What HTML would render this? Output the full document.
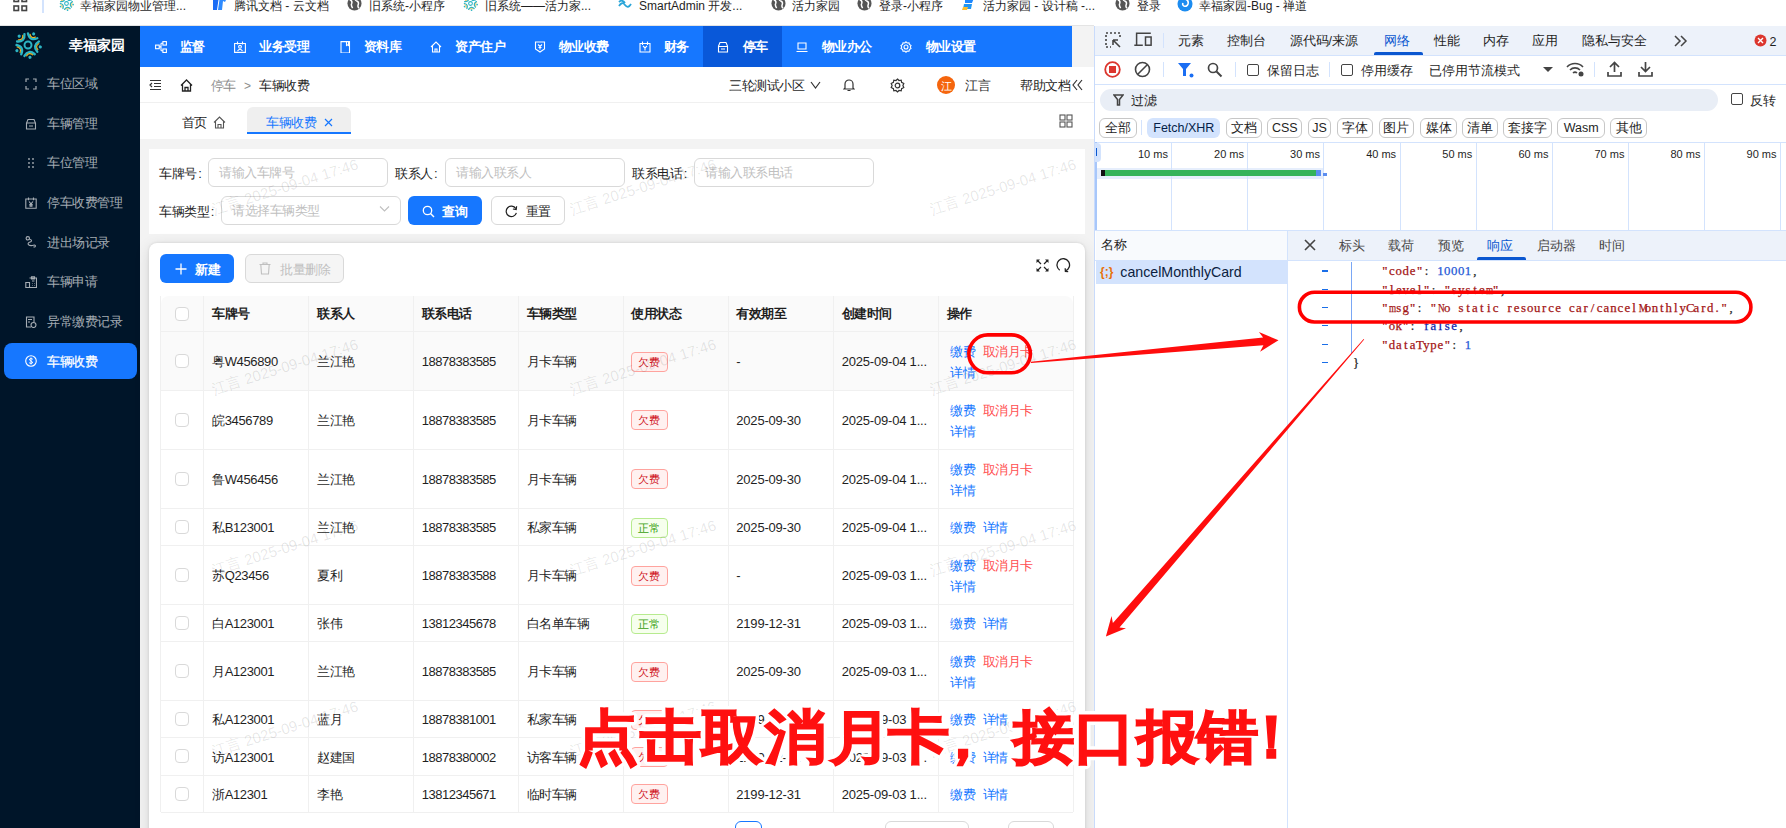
<!DOCTYPE html><html><head><meta charset="utf-8"><style>
html,body{margin:0;padding:0;}
body{width:1786px;height:828px;overflow:hidden;position:relative;background:#fff;font-family:"Liberation Sans",sans-serif;}
.t{position:absolute;white-space:nowrap;}
.mono{font-family:"Liberation Mono",monospace;}
</style></head><body>
<div style="position:absolute;left:0px;top:0px;width:1786px;height:26px;background:#fff"></div>
<svg style="position:absolute;left:13px;top:0px;" width="15" height="13" viewBox="0 0 15 13"><g fill="none" stroke="#444" stroke-width="1.6"><rect x="1" y="-3" width="4.5" height="4.5"/><rect x="9" y="-3" width="4.5" height="4.5"/><rect x="1" y="6" width="4.5" height="4.5"/><rect x="9" y="6" width="4.5" height="4.5"/></g></svg>
<div style="position:absolute;left:42px;top:0px;width:1.5px;height:13px;background:#d3e3fd"></div>
<svg style="position:absolute;left:59px;top:-4px" width="15" height="15" viewBox="0 0 100 100"><g transform="rotate(-45 50 50)"><path d="M31.4 13.5 Q50 35 68.6 13.5" stroke="#2cb5c4" stroke-width="8.5" fill="none" stroke-linecap="round"/><path d="M39 12.5 Q50 25 61 12.5" stroke="#eeb01f" stroke-width="4" fill="none" stroke-linecap="round"/><circle cx="50" cy="5.5" r="5.6" fill="#2cb5c4"/></g><g transform="rotate(27 50 50)"><path d="M31.4 13.5 Q50 35 68.6 13.5" stroke="#2cb5c4" stroke-width="8.5" fill="none" stroke-linecap="round"/><path d="M39 12.5 Q50 25 61 12.5" stroke="#eeb01f" stroke-width="4" fill="none" stroke-linecap="round"/><circle cx="50" cy="5.5" r="5.6" fill="#2cb5c4"/></g><g transform="rotate(99 50 50)"><path d="M31.4 13.5 Q50 35 68.6 13.5" stroke="#2cb5c4" stroke-width="8.5" fill="none" stroke-linecap="round"/><path d="M39 12.5 Q50 25 61 12.5" stroke="#eeb01f" stroke-width="4" fill="none" stroke-linecap="round"/><circle cx="50" cy="5.5" r="5.6" fill="#2cb5c4"/></g><g transform="rotate(171 50 50)"><path d="M31.4 13.5 Q50 35 68.6 13.5" stroke="#2cb5c4" stroke-width="8.5" fill="none" stroke-linecap="round"/><path d="M39 12.5 Q50 25 61 12.5" stroke="#eeb01f" stroke-width="4" fill="none" stroke-linecap="round"/><circle cx="50" cy="5.5" r="5.6" fill="#2cb5c4"/></g><g transform="rotate(243 50 50)"><path d="M31.4 13.5 Q50 35 68.6 13.5" stroke="#2cb5c4" stroke-width="8.5" fill="none" stroke-linecap="round"/><path d="M39 12.5 Q50 25 61 12.5" stroke="#eeb01f" stroke-width="4" fill="none" stroke-linecap="round"/><circle cx="50" cy="5.5" r="5.6" fill="#2cb5c4"/></g><circle cx="50" cy="50" r="12.5" fill="none" stroke="#2cb5c4" stroke-width="7"/></svg>
<div class="t " style="left:80px;top:-4.50px;font-size:12px;line-height:20px;color:#1f1f1f;">幸福家园物业管理...</div>
<svg style="position:absolute;left:212px;top:-4px" width="16" height="15" viewBox="0 0 16 15"><path d="M1 2 L7 0 L5 14 L1 14 Z" fill="#1a6cf5"/><path d="M8 0 L15 2 L13 6 L11 5 L10 14 L6 14 Z" fill="#2e8bff"/></svg>
<div class="t " style="left:234px;top:-4.50px;font-size:12px;line-height:20px;color:#1f1f1f;">腾讯文档 - 云文档</div>
<svg style="position:absolute;left:347px;top:-4px" width="15" height="15" viewBox="0 0 16 16"><circle cx="8" cy="8" r="7.5" fill="#555"/><path d="M3 4 Q6 5 5 8 Q4 10 6 13 M9 1.5 Q8 4 10 5 Q13 6 12 9 Q11 12 13 13" stroke="#fff" stroke-width="1.6" fill="none"/></svg>
<div class="t " style="left:369px;top:-4.50px;font-size:12px;line-height:20px;color:#1f1f1f;">旧系统-小程序</div>
<svg style="position:absolute;left:463px;top:-4px" width="15" height="15" viewBox="0 0 100 100"><g transform="rotate(-45 50 50)"><path d="M31.4 13.5 Q50 35 68.6 13.5" stroke="#2cb5c4" stroke-width="8.5" fill="none" stroke-linecap="round"/><path d="M39 12.5 Q50 25 61 12.5" stroke="#eeb01f" stroke-width="4" fill="none" stroke-linecap="round"/><circle cx="50" cy="5.5" r="5.6" fill="#2cb5c4"/></g><g transform="rotate(27 50 50)"><path d="M31.4 13.5 Q50 35 68.6 13.5" stroke="#2cb5c4" stroke-width="8.5" fill="none" stroke-linecap="round"/><path d="M39 12.5 Q50 25 61 12.5" stroke="#eeb01f" stroke-width="4" fill="none" stroke-linecap="round"/><circle cx="50" cy="5.5" r="5.6" fill="#2cb5c4"/></g><g transform="rotate(99 50 50)"><path d="M31.4 13.5 Q50 35 68.6 13.5" stroke="#2cb5c4" stroke-width="8.5" fill="none" stroke-linecap="round"/><path d="M39 12.5 Q50 25 61 12.5" stroke="#eeb01f" stroke-width="4" fill="none" stroke-linecap="round"/><circle cx="50" cy="5.5" r="5.6" fill="#2cb5c4"/></g><g transform="rotate(171 50 50)"><path d="M31.4 13.5 Q50 35 68.6 13.5" stroke="#2cb5c4" stroke-width="8.5" fill="none" stroke-linecap="round"/><path d="M39 12.5 Q50 25 61 12.5" stroke="#eeb01f" stroke-width="4" fill="none" stroke-linecap="round"/><circle cx="50" cy="5.5" r="5.6" fill="#2cb5c4"/></g><g transform="rotate(243 50 50)"><path d="M31.4 13.5 Q50 35 68.6 13.5" stroke="#2cb5c4" stroke-width="8.5" fill="none" stroke-linecap="round"/><path d="M39 12.5 Q50 25 61 12.5" stroke="#eeb01f" stroke-width="4" fill="none" stroke-linecap="round"/><circle cx="50" cy="5.5" r="5.6" fill="#2cb5c4"/></g><circle cx="50" cy="50" r="12.5" fill="none" stroke="#2cb5c4" stroke-width="7"/></svg>
<div class="t " style="left:485px;top:-4.50px;font-size:12px;line-height:20px;color:#1f1f1f;">旧系统——活力家...</div>
<svg style="position:absolute;left:618px;top:0px" width="14" height="10" viewBox="0 0 14 10"><path d="M1 6 Q4 1 7 5 Q10 9 13 4 M1 2 Q4 -1 7 3" stroke="#2aa5d8" stroke-width="1.8" fill="none"/></svg>
<div class="t " style="left:639px;top:-4.50px;font-size:12px;line-height:20px;color:#1f1f1f;">SmartAdmin 开发...</div>
<svg style="position:absolute;left:771px;top:-4px" width="15" height="15" viewBox="0 0 16 16"><circle cx="8" cy="8" r="7.5" fill="#555"/><path d="M3 4 Q6 5 5 8 Q4 10 6 13 M9 1.5 Q8 4 10 5 Q13 6 12 9 Q11 12 13 13" stroke="#fff" stroke-width="1.6" fill="none"/></svg>
<div class="t " style="left:792px;top:-4.50px;font-size:12px;line-height:20px;color:#1f1f1f;">活力家园</div>
<svg style="position:absolute;left:857px;top:-4px" width="15" height="15" viewBox="0 0 16 16"><circle cx="8" cy="8" r="7.5" fill="#555"/><path d="M3 4 Q6 5 5 8 Q4 10 6 13 M9 1.5 Q8 4 10 5 Q13 6 12 9 Q11 12 13 13" stroke="#fff" stroke-width="1.6" fill="none"/></svg>
<div class="t " style="left:879px;top:-4.50px;font-size:12px;line-height:20px;color:#1f1f1f;">登录-小程序</div>
<svg style="position:absolute;left:962px;top:-3px" width="13" height="14" viewBox="0 0 13 14"><path d="M3 1 L12 1 L10 6 L3 6 Z" fill="#1e88ff"/><path d="M2 7 L10 7 L9 12 L1 12 Z" fill="#2196f3"/><path d="M1 10 L6 10 L5 13 L0 13 Z" fill="#fdbf2d"/></svg>
<div class="t " style="left:983px;top:-4.50px;font-size:12px;line-height:20px;color:#1f1f1f;">活力家园 - 设计稿 -...</div>
<svg style="position:absolute;left:1115px;top:-4px" width="15" height="15" viewBox="0 0 16 16"><circle cx="8" cy="8" r="7.5" fill="#555"/><path d="M3 4 Q6 5 5 8 Q4 10 6 13 M9 1.5 Q8 4 10 5 Q13 6 12 9 Q11 12 13 13" stroke="#fff" stroke-width="1.6" fill="none"/></svg>
<div class="t " style="left:1137px;top:-4.50px;font-size:12px;line-height:20px;color:#1f1f1f;">登录</div>
<svg style="position:absolute;left:1177px;top:-4px" width="16" height="16" viewBox="0 0 16 16"><circle cx="8" cy="8" r="7.5" fill="#1c8cf0"/><path d="M8 3 Q12 4 11 8 Q10 11 7 10 Q5 9 6 7" stroke="#fff" stroke-width="1.6" fill="none"/></svg>
<div class="t " style="left:1199px;top:-4.50px;font-size:12px;line-height:20px;color:#1f1f1f;">幸福家园-Bug - 禅道</div>
<div style="position:absolute;left:0px;top:26px;width:140px;height:802px;background:#001529"></div>
<svg style="position:absolute;left:13.6px;top:31px" width="28" height="28" viewBox="0 0 100 100"><g transform="rotate(-45 50 50)"><path d="M31.4 13.5 Q50 35 68.6 13.5" stroke="#2cb5c4" stroke-width="8.5" fill="none" stroke-linecap="round"/><path d="M39 12.5 Q50 25 61 12.5" stroke="#eeb01f" stroke-width="4" fill="none" stroke-linecap="round"/><circle cx="50" cy="5.5" r="5.6" fill="#2cb5c4"/></g><g transform="rotate(27 50 50)"><path d="M31.4 13.5 Q50 35 68.6 13.5" stroke="#2cb5c4" stroke-width="8.5" fill="none" stroke-linecap="round"/><path d="M39 12.5 Q50 25 61 12.5" stroke="#eeb01f" stroke-width="4" fill="none" stroke-linecap="round"/><circle cx="50" cy="5.5" r="5.6" fill="#2cb5c4"/></g><g transform="rotate(99 50 50)"><path d="M31.4 13.5 Q50 35 68.6 13.5" stroke="#2cb5c4" stroke-width="8.5" fill="none" stroke-linecap="round"/><path d="M39 12.5 Q50 25 61 12.5" stroke="#eeb01f" stroke-width="4" fill="none" stroke-linecap="round"/><circle cx="50" cy="5.5" r="5.6" fill="#2cb5c4"/></g><g transform="rotate(171 50 50)"><path d="M31.4 13.5 Q50 35 68.6 13.5" stroke="#2cb5c4" stroke-width="8.5" fill="none" stroke-linecap="round"/><path d="M39 12.5 Q50 25 61 12.5" stroke="#eeb01f" stroke-width="4" fill="none" stroke-linecap="round"/><circle cx="50" cy="5.5" r="5.6" fill="#2cb5c4"/></g><g transform="rotate(243 50 50)"><path d="M31.4 13.5 Q50 35 68.6 13.5" stroke="#2cb5c4" stroke-width="8.5" fill="none" stroke-linecap="round"/><path d="M39 12.5 Q50 25 61 12.5" stroke="#eeb01f" stroke-width="4" fill="none" stroke-linecap="round"/><circle cx="50" cy="5.5" r="5.6" fill="#2cb5c4"/></g><circle cx="50" cy="50" r="12.5" fill="none" stroke="#2cb5c4" stroke-width="7"/></svg>
<div class="t " style="left:69px;top:35.10px;font-size:14px;line-height:20px;color:#fff;font-weight:bold;">幸福家园</div>
<div style="position:absolute;left:4px;top:343px;width:133px;height:36px;background:#1677ff;border-radius:8px"></div>
<svg style="position:absolute;left:25px;top:78px;" width="12" height="12" viewBox="0 0 12 12"><path d="M1 4V1H4 M8 1H11V4 M11 8V11H8 M4 11H1V8" fill="none" stroke="#a6adb4" stroke-width="1.2"/></svg>
<div class="t " style="left:47px;top:73.90px;font-size:13px;line-height:20px;color:rgba(255,255,255,0.65);letter-spacing:-0.5px;">车位区域</div>
<svg style="position:absolute;left:25px;top:118px;" width="12" height="12" viewBox="0 0 12 12"><path d="M1.5 11V5 L3 1.5 H9 L10.5 5 V11 Z M1.5 5 H10.5 M4 8 H8" fill="none" stroke="#a6adb4" stroke-width="1.1"/></svg>
<div class="t " style="left:47px;top:113.60px;font-size:13px;line-height:20px;color:rgba(255,255,255,0.65);letter-spacing:-0.5px;">车辆管理</div>
<svg style="position:absolute;left:25px;top:157px;" width="12" height="12" viewBox="0 0 12 12"><g fill="#a6adb4"><circle cx="4" cy="2" r="0.9"/><circle cx="8" cy="2" r="0.9"/><circle cx="4" cy="6" r="0.9"/><circle cx="8" cy="6" r="0.9"/><circle cx="4" cy="10" r="0.9"/><circle cx="8" cy="10" r="0.9"/></g></svg>
<div class="t " style="left:47px;top:153.30px;font-size:13px;line-height:20px;color:rgba(255,255,255,0.65);letter-spacing:-0.5px;">车位管理</div>
<svg style="position:absolute;left:25px;top:197px;" width="12" height="12" viewBox="0 0 12 12"><path d="M0.8 2H11.2V11.2H0.8Z M3.5 0.5V3.2 M8.5 0.5V3.2 M4 4.5 L6 6.8 L8 4.5 M6 6.8V10 M4.3 7.6H7.7 M4.3 9H7.7" fill="none" stroke="#a6adb4" stroke-width="1.1"/></svg>
<div class="t " style="left:47px;top:193.00px;font-size:13px;line-height:20px;color:rgba(255,255,255,0.65);letter-spacing:-0.5px;">停车收费管理</div>
<svg style="position:absolute;left:25px;top:236px;" width="12" height="12" viewBox="0 0 12 12"><circle cx="2.8" cy="2.3" r="1.7" fill="none" stroke="#a6adb4" stroke-width="1.1"/><path d="M4.3 3 C7.5 4 7 5.5 4.5 6.3 C2 7.2 3 9.5 6 9.6 C8.5 9.7 9 8.5 10 9.3 C11 10 10 11.4 8.5 10.8" fill="none" stroke="#a6adb4" stroke-width="1.1"/></svg>
<div class="t " style="left:47px;top:232.70px;font-size:13px;line-height:20px;color:rgba(255,255,255,0.65);letter-spacing:-0.5px;">进出场记录</div>
<svg style="position:absolute;left:25px;top:276px;" width="12" height="12" viewBox="0 0 12 12"><path d="M4.5 2H11.5V11.5H4.5 M6.5 0.8H9.5V3H6.5Z M0.8 6.5H4.5V11.5H0.8Z M7 5H9.5 M7.5 7.5H8 M9.5 7.5H10 M7.5 9.5H8 M9.5 9.5H10" fill="none" stroke="#a6adb4" stroke-width="1.1"/></svg>
<div class="t " style="left:47px;top:272.40px;font-size:13px;line-height:20px;color:rgba(255,255,255,0.65);letter-spacing:-0.5px;">车辆申请</div>
<svg style="position:absolute;left:25px;top:316px;" width="12" height="12" viewBox="0 0 12 12"><path d="M6 11H1.5V1H9V6 M3 3.5H7 M3 6H5" fill="none" stroke="#a6adb4" stroke-width="1.1"/><circle cx="8.5" cy="9" r="2.5" fill="none" stroke="#a6adb4" stroke-width="1.1"/></svg>
<div class="t " style="left:47px;top:312.10px;font-size:13px;line-height:20px;color:rgba(255,255,255,0.65);letter-spacing:-0.5px;">异常缴费记录</div>
<svg style="position:absolute;left:25px;top:355px;" width="12" height="12" viewBox="0 0 12 12"><circle cx="6" cy="6" r="5.3" fill="none" stroke="#fff" stroke-width="1.1"/><path d="M7.8 4.2 Q6 3 4.6 4 Q4 5.2 6 6 Q8 6.8 7.4 8 Q6 9 4.2 7.8 M6 2.5V9.5" fill="none" stroke="#fff" stroke-width="1"/></svg>
<div class="t " style="left:47px;top:351.80px;font-size:13px;line-height:20px;color:#fff;letter-spacing:-0.5px;-webkit-text-stroke:0.25px #fff;">车辆收费</div>
<div style="position:absolute;left:140px;top:26px;width:932px;height:41px;background:#1677ff"></div>
<div style="position:absolute;left:1072px;top:26px;width:22px;height:41px;background:#f3f3f3"></div>
<div style="position:absolute;left:0px;top:25px;width:1094px;height:1px;background:#e4e4e4"></div>
<div style="position:absolute;left:703px;top:26px;width:79px;height:41px;background:#0958d9"></div>
<svg style="position:absolute;left:155px;top:41px;" width="12" height="12" viewBox="0 0 12 12"><g fill="none" stroke="#fff" stroke-width="1.1"><rect x="0.6" y="4.1" width="3.6" height="3.6"/><rect x="7.9" y="0.6" width="3.5" height="3.5"/><rect x="7.9" y="8" width="3.5" height="3.5"/><path d="M4.2 5.9H6 M6 2.3V9.7 M6 2.3H7.9 M6 9.7H7.9"/></g></svg>
<div class="t " style="left:179.7px;top:37.30px;font-size:13px;line-height:20px;color:#fff;font-weight:600;letter-spacing:-0.5px;">监督</div>
<svg style="position:absolute;left:234px;top:41px;" width="12" height="12" viewBox="0 0 12 12"><g fill="none" stroke="#fff" stroke-width="1.1"><path d="M0.6 2.5H11.4V11.4H0.6Z M3.5 0.5V3.5 M8.5 0.5V3.5 M3.5 10 Q6 6.5 8.5 10"/><circle cx="6" cy="5.8" r="1.4"/></g></svg>
<div class="t " style="left:259px;top:37.30px;font-size:13px;line-height:20px;color:#fff;font-weight:600;letter-spacing:-0.5px;">业务受理</div>
<svg style="position:absolute;left:339px;top:41px;" width="12" height="12" viewBox="0 0 12 12"><g fill="none" stroke="#fff" stroke-width="1.1"><path d="M2 0.6H10.5V12H2Z M7.5 0.6V4.5 L8.5 3.8 L9.5 4.5 V0.6"/></g></svg>
<div class="t " style="left:363.5px;top:37.30px;font-size:13px;line-height:20px;color:#fff;font-weight:600;letter-spacing:-0.5px;">资料库</div>
<svg style="position:absolute;left:430px;top:41px;" width="12" height="12" viewBox="0 0 12 12"><g fill="none" stroke="#fff" stroke-width="1.1"><path d="M1 6 L6 1 L11 6 M2.5 5V11H9.5V5 M5 11V8H7V11"/></g></svg>
<div class="t " style="left:455px;top:37.30px;font-size:13px;line-height:20px;color:#fff;font-weight:600;letter-spacing:-0.5px;">资产住户</div>
<svg style="position:absolute;left:534px;top:41px;" width="12" height="12" viewBox="0 0 12 12"><g fill="none" stroke="#fff" stroke-width="1.1"><path d="M1.5 1H10.5V8 L6 11 L1.5 8Z M4 3.5 L6 5.5 L8 3.5 M6 5.5V8.5 M4.5 6.5H7.5"/></g></svg>
<div class="t " style="left:558.8px;top:37.30px;font-size:13px;line-height:20px;color:#fff;font-weight:600;letter-spacing:-0.5px;">物业收费</div>
<svg style="position:absolute;left:639px;top:41px;" width="12" height="12" viewBox="0 0 12 12"><g fill="none" stroke="#fff" stroke-width="1.1"><path d="M1 2.5H11V11H1Z M3.5 0.5V4 M8.5 0.5V4 M4 5 L6 7 L8 5 M6 7V9.5"/></g></svg>
<div class="t " style="left:663.6px;top:37.30px;font-size:13px;line-height:20px;color:#fff;font-weight:600;letter-spacing:-0.5px;">财务</div>
<svg style="position:absolute;left:717px;top:41px;" width="12" height="12" viewBox="0 0 12 12"><g fill="none" stroke="#fff" stroke-width="1.1"><path d="M1.5 11V5 L3 1.5 H9 L10.5 5 V11 Z M1.5 5.5 H10.5 M4 8 H8"/></g></svg>
<div class="t " style="left:742.5px;top:37.30px;font-size:13px;line-height:20px;color:#fff;font-weight:600;letter-spacing:-0.5px;">停车</div>
<svg style="position:absolute;left:796px;top:41px;" width="12" height="12" viewBox="0 0 12 12"><g fill="none" stroke="#fff" stroke-width="1.1"><path d="M2 2H10V8H2Z M0.5 10.5H11.5"/></g></svg>
<div class="t " style="left:821.5px;top:37.30px;font-size:13px;line-height:20px;color:#fff;font-weight:600;letter-spacing:-0.5px;">物业办公</div>
<svg style="position:absolute;left:900px;top:41px;" width="12" height="12" viewBox="0 0 12 12"><g fill="none" stroke="#fff" stroke-width="1.1"><circle cx="6" cy="6" r="2"/><path d="M6 0.8 L7.2 2 L9 1.8 L9.4 3.5 L11 4.5 L10.3 6 L11 7.5 L9.4 8.5 L9 10.2 L7.2 10 L6 11.2 L4.8 10 L3 10.2 L2.6 8.5 L1 7.5 L1.7 6 L1 4.5 L2.6 3.5 L3 1.8 L4.8 2 Z"/></g></svg>
<div class="t " style="left:925.6px;top:37.30px;font-size:13px;line-height:20px;color:#fff;font-weight:600;letter-spacing:-0.5px;">物业设置</div>
<div style="position:absolute;left:140px;top:67px;width:954px;height:36px;background:#fff"></div>
<div style="position:absolute;left:140px;top:102px;width:954px;height:1px;background:#f0f0f0"></div>
<svg style="position:absolute;left:149px;top:79px;" width="13" height="12" viewBox="0 0 13 12"><g fill="none" stroke="#333" stroke-width="1.2"><path d="M1 1.5H12 M5 4.5H12 M5 7.5H12 M1 10.5H12 M3 4 L1 6 L3 8"/></g></svg>
<svg style="position:absolute;left:180px;top:79px;" width="13" height="13" viewBox="0 0 13 13"><path d="M1 6.5 L6.5 1 L12 6.5 M2.5 5 V12 H10.5 V5 M5 12 V8.5 H8 V12" fill="none" stroke="#222" stroke-width="1.3"/></svg>
<div class="t " style="left:210.8px;top:75.90px;font-size:13px;line-height:20px;color:#8c8c8c;letter-spacing:-0.5px;">停车</div>
<div class="t " style="left:244px;top:75.90px;font-size:12px;line-height:20px;color:#8c8c8c;">&gt;</div>
<div class="t " style="left:259.2px;top:75.90px;font-size:13px;line-height:20px;color:#1f1f1f;letter-spacing:-0.5px;">车辆收费</div>
<div class="t " style="left:729px;top:75.90px;font-size:13px;line-height:20px;color:#1f1f1f;letter-spacing:-0.5px;">三轮测试小区</div>
<svg style="position:absolute;left:810px;top:80px;" width="11" height="10" viewBox="0 0 11 10"><path d="M1 2 L5.5 8 L10 2" fill="none" stroke="#333" stroke-width="1.2"/></svg>
<svg style="position:absolute;left:843px;top:78px;" width="12" height="14" viewBox="0 0 12 14"><path d="M2 10 V6 A4 4 0 0 1 10 6 V10 L11 11 H1 Z M4.5 12.5 H7.5" fill="none" stroke="#333" stroke-width="1.2"/></svg>
<svg style="position:absolute;left:890px;top:78px;" width="15" height="15" viewBox="0 0 15 15"><g fill="none" stroke="#333" stroke-width="1.2"><circle cx="7.5" cy="7.5" r="2.3"/><path d="M7.5 1 L9 2.5 L11.2 2.2 L11.6 4.3 L13.8 5.5 L12.9 7.5 L13.8 9.5 L11.6 10.7 L11.2 12.8 L9 12.5 L7.5 14 L6 12.5 L3.8 12.8 L3.4 10.7 L1.2 9.5 L2.1 7.5 L1.2 5.5 L3.4 4.3 L3.8 2.2 L6 2.5 Z"/></g></svg>
<div style="position:absolute;left:937px;top:76px;width:18px;height:18px;background:#f5650d;border-radius:50%"></div>
<div class="t " style="left:940.5px;top:75.90px;font-size:11px;line-height:20px;color:#fff;">江</div>
<div class="t " style="left:965px;top:75.90px;font-size:13px;line-height:20px;color:#1f1f1f;letter-spacing:-0.5px;">江言</div>
<div class="t " style="left:1020px;top:75.90px;font-size:13px;line-height:20px;color:#1f1f1f;letter-spacing:-0.5px;">帮助文档</div>
<svg style="position:absolute;left:1072px;top:79px;" width="11" height="12" viewBox="0 0 11 12"><path d="M5 1 L1 6 L5 11 M10 1 L6 6 L10 11" fill="none" stroke="#333" stroke-width="1.2"/></svg>
<div style="position:absolute;left:140px;top:103px;width:954px;height:36px;background:#fff"></div>
<div class="t " style="left:181.6px;top:113.20px;font-size:13px;line-height:20px;color:#1f1f1f;letter-spacing:-0.5px;">首页</div>
<svg style="position:absolute;left:213px;top:116px;" width="13" height="13" viewBox="0 0 13 13"><path d="M1 6.5 L6.5 1 L12 6.5 M2.5 5 V12 H10.5 V5 M5 12 V8.5 H8 V12" fill="none" stroke="#555" stroke-width="1.1"/></svg>
<div style="position:absolute;left:247px;top:107px;width:104px;height:26.5px;background:#efefef;border-radius:6px 6px 0 0;border-bottom:2px solid #1677ff;box-sizing:border-box"></div>
<div class="t " style="left:266px;top:113.20px;font-size:13px;line-height:20px;color:#1677ff;letter-spacing:-0.5px;">车辆收费</div>
<svg style="position:absolute;left:324px;top:118px;" width="9" height="9" viewBox="0 0 9 9"><path d="M1 1 L8 8 M8 1 L1 8" stroke="#1677ff" stroke-width="1.2"/></svg>
<svg style="position:absolute;left:1059px;top:114px;" width="14" height="14" viewBox="0 0 14 14"><g fill="none" stroke="#555" stroke-width="1.1"><rect x="1" y="1" width="5" height="5"/><rect x="8" y="1" width="5" height="5"/><rect x="1" y="8" width="5" height="5"/><rect x="8" y="8" width="5" height="5"/></g></svg>
<div style="position:absolute;left:140px;top:139px;width:954px;height:689px;background:#f3f3f3"></div>
<div style="position:absolute;left:149px;top:149px;width:936px;height:85px;background:#fff"></div>
<div class="t " style="left:159.3px;top:164.00px;font-size:13px;line-height:20px;color:#1f1f1f;letter-spacing:-0.5px;">车牌号<span style="margin-left:1.5px">:</span></div>
<div style="position:absolute;left:208px;top:158px;width:180px;height:29px;background:#fff;border:1px solid #d9d9d9;border-radius:6px;box-sizing:border-box"></div>
<div class="t " style="left:219px;top:163.00px;font-size:13px;line-height:20px;color:#bfbfbf;letter-spacing:-0.5px;">请输入车牌号</div>
<div class="t " style="left:395px;top:164.00px;font-size:13px;line-height:20px;color:#1f1f1f;letter-spacing:-0.5px;">联系人<span style="margin-left:1.5px">:</span></div>
<div style="position:absolute;left:445px;top:158px;width:180px;height:29px;background:#fff;border:1px solid #d9d9d9;border-radius:6px;box-sizing:border-box"></div>
<div class="t " style="left:456px;top:163.00px;font-size:13px;line-height:20px;color:#bfbfbf;letter-spacing:-0.5px;">请输入联系人</div>
<div class="t " style="left:632.3px;top:164.00px;font-size:13px;line-height:20px;color:#1f1f1f;letter-spacing:-0.5px;">联系电话<span style="margin-left:1.5px">:</span></div>
<div style="position:absolute;left:694px;top:158px;width:180px;height:29px;background:#fff;border:1px solid #d9d9d9;border-radius:6px;box-sizing:border-box"></div>
<div class="t " style="left:705px;top:163.00px;font-size:13px;line-height:20px;color:#bfbfbf;letter-spacing:-0.5px;">请输入联系电话</div>
<div class="t " style="left:159.3px;top:201.70px;font-size:13px;line-height:20px;color:#1f1f1f;letter-spacing:-0.5px;">车辆类型<span style="margin-left:1.5px">:</span></div>
<div style="position:absolute;left:221px;top:196px;width:180px;height:29px;background:#fff;border:1px solid #d9d9d9;border-radius:6px;box-sizing:border-box"></div>
<div class="t " style="left:232px;top:201.00px;font-size:13px;line-height:20px;color:#bfbfbf;letter-spacing:-0.5px;">请选择车辆类型</div>
<svg style="position:absolute;left:379px;top:205px;" width="11" height="8" viewBox="0 0 11 8"><path d="M1 1.5 L5.5 6 L10 1.5" fill="none" stroke="#bfbfbf" stroke-width="1.1"/></svg>
<div style="position:absolute;left:408px;top:196px;width:74px;height:29px;background:#1677ff;border-radius:6px"></div>
<svg style="position:absolute;left:422px;top:205px;" width="13" height="13" viewBox="0 0 13 13"><circle cx="5.5" cy="5.5" r="4.2" fill="none" stroke="#fff" stroke-width="1.3"/><path d="M8.5 8.5 L12 12" stroke="#fff" stroke-width="1.4"/></svg>
<div class="t " style="left:442px;top:201.70px;font-size:13px;line-height:20px;color:#fff;font-weight:600;letter-spacing:-0.5px;">查询</div>
<div style="position:absolute;left:491px;top:196px;width:74px;height:29px;background:#fff;border:1px solid #d9d9d9;border-radius:6px;box-sizing:border-box"></div>
<svg style="position:absolute;left:505px;top:205px;" width="13" height="13" viewBox="0 0 13 13"><path d="M10.8 3.6 A5.2 5.2 0 1 0 11.4 7.8" fill="none" stroke="#1f1f1f" stroke-width="1.2"/><path d="M11.6 1.2 L11.2 4.6 L7.9 4" fill="none" stroke="#1f1f1f" stroke-width="1.2"/></svg>
<div class="t " style="left:525.5px;top:201.70px;font-size:13px;line-height:20px;color:#1f1f1f;letter-spacing:-0.5px;">重置</div>
<div style="position:absolute;left:149px;top:243px;width:936px;height:600px;background:#fff;border-radius:8px;box-shadow:0 0 3px rgba(0,0,0,0.12),0 4px 16px rgba(0,0,0,0.12)"></div>
<div style="position:absolute;left:160px;top:254px;width:74px;height:29px;background:#1677ff;border-radius:6px"></div>
<svg style="position:absolute;left:175px;top:263px;" width="12" height="12" viewBox="0 0 12 12"><path d="M6 0.5V11.5 M0.5 6H11.5" stroke="#fff" stroke-width="1.3"/></svg>
<div class="t " style="left:195px;top:259.90px;font-size:13px;line-height:20px;color:#fff;font-weight:600;letter-spacing:-0.5px;">新建</div>
<div style="position:absolute;left:245px;top:254px;width:99px;height:29px;background:#f5f5f5;border:1px solid #d9d9d9;border-radius:6px;box-sizing:border-box"></div>
<svg style="position:absolute;left:259px;top:262px;" width="12" height="13" viewBox="0 0 12 13"><path d="M0.5 2.5H11.5 M4 2.5V1H8V2.5 M1.8 2.5 L2.5 12H9.5L10.2 2.5" fill="none" stroke="#bfbfbf" stroke-width="1.1"/></svg>
<div class="t " style="left:280px;top:259.50px;font-size:13px;line-height:20px;color:#bfbfbf;letter-spacing:-0.5px;">批量删除</div>
<svg style="position:absolute;left:1036px;top:259px;" width="13" height="13" viewBox="0 0 13 13"><path d="M1.5 1.5 L5 5 M11.5 1.5 L8 5 M1.5 11.5 L5 8 M11.5 11.5 L8 8" fill="none" stroke="#222" stroke-width="1.2"/><path d="M0.5 0.5H4L0.5 4Z M12.5 0.5H9L12.5 4Z M0.5 12.5H4L0.5 9Z M12.5 12.5H9L12.5 9Z" fill="#222"/></svg>
<svg style="position:absolute;left:1056px;top:258px;" width="15" height="15" viewBox="0 0 15 15"><path d="M3.7 12.2 A6.3 6.3 0 1 1 9.45 12.9" fill="none" stroke="#222" stroke-width="1.3"/><path d="M9.2 10.2 L9.4 13.3 L12.2 13.6" fill="none" stroke="#222" stroke-width="1.3"/></svg>
<div style="position:absolute;left:160.5px;top:296.4px;width:912.8px;height:35px;background:#fafafa;border-radius:8px 8px 0 0"></div>
<div style="position:absolute;left:160.5px;top:331.3px;width:912.8px;height:59px;background:#fafafa"></div>
<div style="position:absolute;left:160.5px;top:330.8px;width:912.8px;height:1px;background:#f0f0f0"></div>
<div style="position:absolute;left:160.5px;top:389.8px;width:912.8px;height:1px;background:#f0f0f0"></div>
<div style="position:absolute;left:160.5px;top:448.6px;width:912.8px;height:1px;background:#f0f0f0"></div>
<div style="position:absolute;left:160.5px;top:507.6px;width:912.8px;height:1px;background:#f0f0f0"></div>
<div style="position:absolute;left:160.5px;top:545.0px;width:912.8px;height:1px;background:#f0f0f0"></div>
<div style="position:absolute;left:160.5px;top:603.7px;width:912.8px;height:1px;background:#f0f0f0"></div>
<div style="position:absolute;left:160.5px;top:641.1px;width:912.8px;height:1px;background:#f0f0f0"></div>
<div style="position:absolute;left:160.5px;top:699.8px;width:912.8px;height:1px;background:#f0f0f0"></div>
<div style="position:absolute;left:160.5px;top:737.2px;width:912.8px;height:1px;background:#f0f0f0"></div>
<div style="position:absolute;left:160.5px;top:774.6px;width:912.8px;height:1px;background:#f0f0f0"></div>
<div style="position:absolute;left:160.5px;top:811.9px;width:912.8px;height:1px;background:#f0f0f0"></div>
<div style="position:absolute;left:160.0px;top:296.4px;width:1px;height:516.0px;background:#f0f0f0"></div>
<div style="position:absolute;left:203.2px;top:296.4px;width:1px;height:516.0px;background:#f0f0f0"></div>
<div style="position:absolute;left:308.2px;top:296.4px;width:1px;height:516.0px;background:#f0f0f0"></div>
<div style="position:absolute;left:413.0px;top:296.4px;width:1px;height:516.0px;background:#f0f0f0"></div>
<div style="position:absolute;left:518.0px;top:296.4px;width:1px;height:516.0px;background:#f0f0f0"></div>
<div style="position:absolute;left:622.5px;top:296.4px;width:1px;height:516.0px;background:#f0f0f0"></div>
<div style="position:absolute;left:727.5px;top:296.4px;width:1px;height:516.0px;background:#f0f0f0"></div>
<div style="position:absolute;left:832.9px;top:296.4px;width:1px;height:516.0px;background:#f0f0f0"></div>
<div style="position:absolute;left:937.8px;top:296.4px;width:1px;height:516.0px;background:#f0f0f0"></div>
<div style="position:absolute;left:1072.8px;top:296.4px;width:1px;height:516.0px;background:#f0f0f0"></div>
<div style="position:absolute;left:175px;top:307.2px;width:14px;height:14px;background:#fff;border:1px solid #d9d9d9;border-radius:4px;box-sizing:border-box"></div>
<div class="t " style="left:212.0px;top:304.30px;font-size:13px;line-height:20px;color:#1f1f1f;font-weight:bold;letter-spacing:-0.5px;">车牌号</div>
<div class="t " style="left:317.0px;top:304.30px;font-size:13px;line-height:20px;color:#1f1f1f;font-weight:bold;letter-spacing:-0.5px;">联系人</div>
<div class="t " style="left:421.8px;top:304.30px;font-size:13px;line-height:20px;color:#1f1f1f;font-weight:bold;letter-spacing:-0.5px;">联系电话</div>
<div class="t " style="left:526.8px;top:304.30px;font-size:13px;line-height:20px;color:#1f1f1f;font-weight:bold;letter-spacing:-0.5px;">车辆类型</div>
<div class="t " style="left:631.3px;top:304.30px;font-size:13px;line-height:20px;color:#1f1f1f;font-weight:bold;letter-spacing:-0.5px;">使用状态</div>
<div class="t " style="left:736.3px;top:304.30px;font-size:13px;line-height:20px;color:#1f1f1f;font-weight:bold;letter-spacing:-0.5px;">有效期至</div>
<div class="t " style="left:841.6999999999999px;top:304.30px;font-size:13px;line-height:20px;color:#1f1f1f;font-weight:bold;letter-spacing:-0.5px;">创建时间</div>
<div class="t " style="left:946.5999999999999px;top:304.30px;font-size:13px;line-height:20px;color:#1f1f1f;font-weight:bold;letter-spacing:-0.5px;">操作</div>
<div style="position:absolute;left:175px;top:353.8px;width:14px;height:14px;background:#fff;border:1px solid #d9d9d9;border-radius:4px;box-sizing:border-box"></div>
<div class="t " style="left:212.0px;top:352.00px;font-size:13px;line-height:20px;color:#1f1f1f;letter-spacing:-0.35px;">粤W456890</div>
<div class="t " style="left:317.0px;top:352.00px;font-size:13px;line-height:20px;color:#1f1f1f;letter-spacing:-0.5px;">兰江艳</div>
<div class="t " style="left:421.8px;top:352.00px;font-size:13px;line-height:20px;color:#1f1f1f;letter-spacing:-0.5px;">18878383585</div>
<div class="t " style="left:526.8px;top:352.00px;font-size:13px;line-height:20px;color:#1f1f1f;letter-spacing:-0.5px;">月卡车辆</div>
<div style="position:absolute;left:631px;top:351.5px;width:37px;height:20px;background:#fff1f0;border:1px solid #ffa39e;border-radius:4px;box-sizing:border-box"></div>
<div class="t " style="left:638px;top:351.50px;font-size:11px;line-height:20px;color:#cf1322;">欠费</div>
<div class="t " style="left:736.3px;top:352.00px;font-size:13px;line-height:20px;color:#1f1f1f;letter-spacing:-0.2px;">-</div>
<div class="t " style="left:841.6999999999999px;top:352.00px;font-size:13px;line-height:20px;color:#1f1f1f;letter-spacing:-0.2px;">2025-09-04 1...</div>
<div class="t " style="left:950.2px;top:341.70px;font-size:13px;line-height:20px;color:#1677ff;letter-spacing:-0.5px;">缴费</div>
<div class="t " style="left:982.5px;top:341.70px;font-size:13px;line-height:20px;color:#ff4d4f;letter-spacing:-0.5px;">取消月卡</div>
<div class="t " style="left:950.2px;top:363.20px;font-size:13px;line-height:20px;color:#1677ff;letter-spacing:-0.5px;">详情</div>
<div style="position:absolute;left:175px;top:412.70000000000005px;width:14px;height:14px;background:#fff;border:1px solid #d9d9d9;border-radius:4px;box-sizing:border-box"></div>
<div class="t " style="left:212.0px;top:410.90px;font-size:13px;line-height:20px;color:#1f1f1f;letter-spacing:-0.35px;">皖3456789</div>
<div class="t " style="left:317.0px;top:410.90px;font-size:13px;line-height:20px;color:#1f1f1f;letter-spacing:-0.5px;">兰江艳</div>
<div class="t " style="left:421.8px;top:410.90px;font-size:13px;line-height:20px;color:#1f1f1f;letter-spacing:-0.5px;">18878383585</div>
<div class="t " style="left:526.8px;top:410.90px;font-size:13px;line-height:20px;color:#1f1f1f;letter-spacing:-0.5px;">月卡车辆</div>
<div style="position:absolute;left:631px;top:410.40000000000003px;width:37px;height:20px;background:#fff1f0;border:1px solid #ffa39e;border-radius:4px;box-sizing:border-box"></div>
<div class="t " style="left:638px;top:410.40px;font-size:11px;line-height:20px;color:#cf1322;">欠费</div>
<div class="t " style="left:736.3px;top:410.90px;font-size:13px;line-height:20px;color:#1f1f1f;letter-spacing:-0.2px;">2025-09-30</div>
<div class="t " style="left:841.6999999999999px;top:410.90px;font-size:13px;line-height:20px;color:#1f1f1f;letter-spacing:-0.2px;">2025-09-04 1...</div>
<div class="t " style="left:950.2px;top:400.60px;font-size:13px;line-height:20px;color:#1677ff;letter-spacing:-0.5px;">缴费</div>
<div class="t " style="left:982.5px;top:400.60px;font-size:13px;line-height:20px;color:#ff4d4f;letter-spacing:-0.5px;">取消月卡</div>
<div class="t " style="left:950.2px;top:422.10px;font-size:13px;line-height:20px;color:#1677ff;letter-spacing:-0.5px;">详情</div>
<div style="position:absolute;left:175px;top:471.6px;width:14px;height:14px;background:#fff;border:1px solid #d9d9d9;border-radius:4px;box-sizing:border-box"></div>
<div class="t " style="left:212.0px;top:469.80px;font-size:13px;line-height:20px;color:#1f1f1f;letter-spacing:-0.35px;">鲁W456456</div>
<div class="t " style="left:317.0px;top:469.80px;font-size:13px;line-height:20px;color:#1f1f1f;letter-spacing:-0.5px;">兰江艳</div>
<div class="t " style="left:421.8px;top:469.80px;font-size:13px;line-height:20px;color:#1f1f1f;letter-spacing:-0.5px;">18878383585</div>
<div class="t " style="left:526.8px;top:469.80px;font-size:13px;line-height:20px;color:#1f1f1f;letter-spacing:-0.5px;">月卡车辆</div>
<div style="position:absolute;left:631px;top:469.3px;width:37px;height:20px;background:#fff1f0;border:1px solid #ffa39e;border-radius:4px;box-sizing:border-box"></div>
<div class="t " style="left:638px;top:469.30px;font-size:11px;line-height:20px;color:#cf1322;">欠费</div>
<div class="t " style="left:736.3px;top:469.80px;font-size:13px;line-height:20px;color:#1f1f1f;letter-spacing:-0.2px;">2025-09-30</div>
<div class="t " style="left:841.6999999999999px;top:469.80px;font-size:13px;line-height:20px;color:#1f1f1f;letter-spacing:-0.2px;">2025-09-04 1...</div>
<div class="t " style="left:950.2px;top:459.50px;font-size:13px;line-height:20px;color:#1677ff;letter-spacing:-0.5px;">缴费</div>
<div class="t " style="left:982.5px;top:459.50px;font-size:13px;line-height:20px;color:#ff4d4f;letter-spacing:-0.5px;">取消月卡</div>
<div class="t " style="left:950.2px;top:481.00px;font-size:13px;line-height:20px;color:#1677ff;letter-spacing:-0.5px;">详情</div>
<div style="position:absolute;left:175px;top:519.8px;width:14px;height:14px;background:#fff;border:1px solid #d9d9d9;border-radius:4px;box-sizing:border-box"></div>
<div class="t " style="left:212.0px;top:518.00px;font-size:13px;line-height:20px;color:#1f1f1f;letter-spacing:-0.35px;">私B123001</div>
<div class="t " style="left:317.0px;top:518.00px;font-size:13px;line-height:20px;color:#1f1f1f;letter-spacing:-0.5px;">兰江艳</div>
<div class="t " style="left:421.8px;top:518.00px;font-size:13px;line-height:20px;color:#1f1f1f;letter-spacing:-0.5px;">18878383585</div>
<div class="t " style="left:526.8px;top:518.00px;font-size:13px;line-height:20px;color:#1f1f1f;letter-spacing:-0.5px;">私家车辆</div>
<div style="position:absolute;left:631px;top:517.5px;width:37px;height:20px;background:#f6ffed;border:1px solid #b7eb8f;border-radius:4px;box-sizing:border-box"></div>
<div class="t " style="left:638px;top:517.50px;font-size:11px;line-height:20px;color:#389e0d;">正常</div>
<div class="t " style="left:736.3px;top:518.00px;font-size:13px;line-height:20px;color:#1f1f1f;letter-spacing:-0.2px;">2025-09-30</div>
<div class="t " style="left:841.6999999999999px;top:518.00px;font-size:13px;line-height:20px;color:#1f1f1f;letter-spacing:-0.2px;">2025-09-04 1...</div>
<div class="t " style="left:950.2px;top:518.00px;font-size:13px;line-height:20px;color:#1677ff;letter-spacing:-0.5px;">缴费</div>
<div class="t " style="left:982.5px;top:518.00px;font-size:13px;line-height:20px;color:#1677ff;letter-spacing:-0.5px;">详情</div>
<div style="position:absolute;left:175px;top:567.85px;width:14px;height:14px;background:#fff;border:1px solid #d9d9d9;border-radius:4px;box-sizing:border-box"></div>
<div class="t " style="left:212.0px;top:566.05px;font-size:13px;line-height:20px;color:#1f1f1f;letter-spacing:-0.35px;">苏Q23456</div>
<div class="t " style="left:317.0px;top:566.05px;font-size:13px;line-height:20px;color:#1f1f1f;letter-spacing:-0.5px;">夏利</div>
<div class="t " style="left:421.8px;top:566.05px;font-size:13px;line-height:20px;color:#1f1f1f;letter-spacing:-0.5px;">18878383588</div>
<div class="t " style="left:526.8px;top:566.05px;font-size:13px;line-height:20px;color:#1f1f1f;letter-spacing:-0.5px;">月卡车辆</div>
<div style="position:absolute;left:631px;top:565.5500000000001px;width:37px;height:20px;background:#fff1f0;border:1px solid #ffa39e;border-radius:4px;box-sizing:border-box"></div>
<div class="t " style="left:638px;top:565.55px;font-size:11px;line-height:20px;color:#cf1322;">欠费</div>
<div class="t " style="left:736.3px;top:566.05px;font-size:13px;line-height:20px;color:#1f1f1f;letter-spacing:-0.2px;">-</div>
<div class="t " style="left:841.6999999999999px;top:566.05px;font-size:13px;line-height:20px;color:#1f1f1f;letter-spacing:-0.2px;">2025-09-03 1...</div>
<div class="t " style="left:950.2px;top:555.75px;font-size:13px;line-height:20px;color:#1677ff;letter-spacing:-0.5px;">缴费</div>
<div class="t " style="left:982.5px;top:555.75px;font-size:13px;line-height:20px;color:#ff4d4f;letter-spacing:-0.5px;">取消月卡</div>
<div class="t " style="left:950.2px;top:577.25px;font-size:13px;line-height:20px;color:#1677ff;letter-spacing:-0.5px;">详情</div>
<div style="position:absolute;left:175px;top:615.9000000000001px;width:14px;height:14px;background:#fff;border:1px solid #d9d9d9;border-radius:4px;box-sizing:border-box"></div>
<div class="t " style="left:212.0px;top:614.10px;font-size:13px;line-height:20px;color:#1f1f1f;letter-spacing:-0.35px;">白A123001</div>
<div class="t " style="left:317.0px;top:614.10px;font-size:13px;line-height:20px;color:#1f1f1f;letter-spacing:-0.5px;">张伟</div>
<div class="t " style="left:421.8px;top:614.10px;font-size:13px;line-height:20px;color:#1f1f1f;letter-spacing:-0.5px;">13812345678</div>
<div class="t " style="left:526.8px;top:614.10px;font-size:13px;line-height:20px;color:#1f1f1f;letter-spacing:-0.5px;">白名单车辆</div>
<div style="position:absolute;left:631px;top:613.6000000000001px;width:37px;height:20px;background:#f6ffed;border:1px solid #b7eb8f;border-radius:4px;box-sizing:border-box"></div>
<div class="t " style="left:638px;top:613.60px;font-size:11px;line-height:20px;color:#389e0d;">正常</div>
<div class="t " style="left:736.3px;top:614.10px;font-size:13px;line-height:20px;color:#1f1f1f;letter-spacing:-0.2px;">2199-12-31</div>
<div class="t " style="left:841.6999999999999px;top:614.10px;font-size:13px;line-height:20px;color:#1f1f1f;letter-spacing:-0.2px;">2025-09-03 1...</div>
<div class="t " style="left:950.2px;top:614.10px;font-size:13px;line-height:20px;color:#1677ff;letter-spacing:-0.5px;">缴费</div>
<div class="t " style="left:982.5px;top:614.10px;font-size:13px;line-height:20px;color:#1677ff;letter-spacing:-0.5px;">详情</div>
<div style="position:absolute;left:175px;top:663.95px;width:14px;height:14px;background:#fff;border:1px solid #d9d9d9;border-radius:4px;box-sizing:border-box"></div>
<div class="t " style="left:212.0px;top:662.15px;font-size:13px;line-height:20px;color:#1f1f1f;letter-spacing:-0.35px;">月A123001</div>
<div class="t " style="left:317.0px;top:662.15px;font-size:13px;line-height:20px;color:#1f1f1f;letter-spacing:-0.5px;">兰江艳</div>
<div class="t " style="left:421.8px;top:662.15px;font-size:13px;line-height:20px;color:#1f1f1f;letter-spacing:-0.5px;">18878383585</div>
<div class="t " style="left:526.8px;top:662.15px;font-size:13px;line-height:20px;color:#1f1f1f;letter-spacing:-0.5px;">月卡车辆</div>
<div style="position:absolute;left:631px;top:661.6500000000001px;width:37px;height:20px;background:#fff1f0;border:1px solid #ffa39e;border-radius:4px;box-sizing:border-box"></div>
<div class="t " style="left:638px;top:661.65px;font-size:11px;line-height:20px;color:#cf1322;">欠费</div>
<div class="t " style="left:736.3px;top:662.15px;font-size:13px;line-height:20px;color:#1f1f1f;letter-spacing:-0.2px;">2025-09-30</div>
<div class="t " style="left:841.6999999999999px;top:662.15px;font-size:13px;line-height:20px;color:#1f1f1f;letter-spacing:-0.2px;">2025-09-03 1...</div>
<div class="t " style="left:950.2px;top:651.85px;font-size:13px;line-height:20px;color:#1677ff;letter-spacing:-0.5px;">缴费</div>
<div class="t " style="left:982.5px;top:651.85px;font-size:13px;line-height:20px;color:#ff4d4f;letter-spacing:-0.5px;">取消月卡</div>
<div class="t " style="left:950.2px;top:673.35px;font-size:13px;line-height:20px;color:#1677ff;letter-spacing:-0.5px;">详情</div>
<div style="position:absolute;left:175px;top:712.0px;width:14px;height:14px;background:#fff;border:1px solid #d9d9d9;border-radius:4px;box-sizing:border-box"></div>
<div class="t " style="left:212.0px;top:710.20px;font-size:13px;line-height:20px;color:#1f1f1f;letter-spacing:-0.35px;">私A123001</div>
<div class="t " style="left:317.0px;top:710.20px;font-size:13px;line-height:20px;color:#1f1f1f;letter-spacing:-0.5px;">蓝月</div>
<div class="t " style="left:421.8px;top:710.20px;font-size:13px;line-height:20px;color:#1f1f1f;letter-spacing:-0.5px;">18878381001</div>
<div class="t " style="left:526.8px;top:710.20px;font-size:13px;line-height:20px;color:#1f1f1f;letter-spacing:-0.5px;">私家车辆</div>
<div style="position:absolute;left:631px;top:709.7px;width:37px;height:20px;background:#fff1f0;border:1px solid #ffa39e;border-radius:4px;box-sizing:border-box"></div>
<div class="t " style="left:638px;top:709.70px;font-size:11px;line-height:20px;color:#cf1322;">欠费</div>
<div class="t " style="left:736.3px;top:710.20px;font-size:13px;line-height:20px;color:#1f1f1f;letter-spacing:-0.2px;">2199-12-31</div>
<div class="t " style="left:841.6999999999999px;top:710.20px;font-size:13px;line-height:20px;color:#1f1f1f;letter-spacing:-0.2px;">2025-09-03 1...</div>
<div class="t " style="left:950.2px;top:710.20px;font-size:13px;line-height:20px;color:#1677ff;letter-spacing:-0.5px;">缴费</div>
<div class="t " style="left:982.5px;top:710.20px;font-size:13px;line-height:20px;color:#1677ff;letter-spacing:-0.5px;">详情</div>
<div style="position:absolute;left:175px;top:749.4000000000001px;width:14px;height:14px;background:#fff;border:1px solid #d9d9d9;border-radius:4px;box-sizing:border-box"></div>
<div class="t " style="left:212.0px;top:747.60px;font-size:13px;line-height:20px;color:#1f1f1f;letter-spacing:-0.35px;">访A123001</div>
<div class="t " style="left:317.0px;top:747.60px;font-size:13px;line-height:20px;color:#1f1f1f;letter-spacing:-0.5px;">赵建国</div>
<div class="t " style="left:421.8px;top:747.60px;font-size:13px;line-height:20px;color:#1f1f1f;letter-spacing:-0.5px;">18878380002</div>
<div class="t " style="left:526.8px;top:747.60px;font-size:13px;line-height:20px;color:#1f1f1f;letter-spacing:-0.5px;">访客车辆</div>
<div style="position:absolute;left:631px;top:747.1000000000001px;width:37px;height:20px;background:#fff1f0;border:1px solid #ffa39e;border-radius:4px;box-sizing:border-box"></div>
<div class="t " style="left:638px;top:747.10px;font-size:11px;line-height:20px;color:#cf1322;">欠费</div>
<div class="t " style="left:736.3px;top:747.60px;font-size:13px;line-height:20px;color:#1f1f1f;letter-spacing:-0.2px;">2199-12-31</div>
<div class="t " style="left:841.6999999999999px;top:747.60px;font-size:13px;line-height:20px;color:#1f1f1f;letter-spacing:-0.2px;">2025-09-03 1...</div>
<div class="t " style="left:950.2px;top:747.60px;font-size:13px;line-height:20px;color:#1677ff;letter-spacing:-0.5px;">缴费</div>
<div class="t " style="left:982.5px;top:747.60px;font-size:13px;line-height:20px;color:#1677ff;letter-spacing:-0.5px;">详情</div>
<div style="position:absolute;left:175px;top:786.75px;width:14px;height:14px;background:#fff;border:1px solid #d9d9d9;border-radius:4px;box-sizing:border-box"></div>
<div class="t " style="left:212.0px;top:784.95px;font-size:13px;line-height:20px;color:#1f1f1f;letter-spacing:-0.35px;">浙A12301</div>
<div class="t " style="left:317.0px;top:784.95px;font-size:13px;line-height:20px;color:#1f1f1f;letter-spacing:-0.5px;">李艳</div>
<div class="t " style="left:421.8px;top:784.95px;font-size:13px;line-height:20px;color:#1f1f1f;letter-spacing:-0.5px;">13812345671</div>
<div class="t " style="left:526.8px;top:784.95px;font-size:13px;line-height:20px;color:#1f1f1f;letter-spacing:-0.5px;">临时车辆</div>
<div style="position:absolute;left:631px;top:784.45px;width:37px;height:20px;background:#fff1f0;border:1px solid #ffa39e;border-radius:4px;box-sizing:border-box"></div>
<div class="t " style="left:638px;top:784.45px;font-size:11px;line-height:20px;color:#cf1322;">欠费</div>
<div class="t " style="left:736.3px;top:784.95px;font-size:13px;line-height:20px;color:#1f1f1f;letter-spacing:-0.2px;">2199-12-31</div>
<div class="t " style="left:841.6999999999999px;top:784.95px;font-size:13px;line-height:20px;color:#1f1f1f;letter-spacing:-0.2px;">2025-09-03 1...</div>
<div class="t " style="left:950.2px;top:784.95px;font-size:13px;line-height:20px;color:#1677ff;letter-spacing:-0.5px;">缴费</div>
<div class="t " style="left:982.5px;top:784.95px;font-size:13px;line-height:20px;color:#1677ff;letter-spacing:-0.5px;">详情</div>
<div style="position:absolute;left:735px;top:821px;width:27px;height:20px;background:#fff;border:1px solid #1677ff;border-radius:6px;box-sizing:border-box"></div>
<div style="position:absolute;left:885px;top:821px;width:84px;height:20px;background:#fff;border:1px solid #d9d9d9;border-radius:6px;box-sizing:border-box"></div>
<div style="position:absolute;left:1008px;top:821px;width:46px;height:20px;background:#fff;border:1px solid #d9d9d9;border-radius:6px;box-sizing:border-box"></div>
<div style="position:absolute;left:1094px;top:26px;width:692px;height:802px;background:#fff"></div>
<div style="position:absolute;left:1094px;top:26px;width:1.2px;height:802px;background:#c9dbfb"></div>
<div style="position:absolute;left:1095px;top:26px;width:692px;height:29px;background:#edf2fa"></div>
<div style="position:absolute;left:1095px;top:55px;width:692px;height:1px;background:#d3e3fd"></div>
<svg style="position:absolute;left:1105px;top:32px;" width="17" height="17" viewBox="0 0 17 17"><path d="M1 1H3 M5 1H7 M9 1H11 M13 1H15 M1 3V5 M1 7V9 M1 11V13 M1 15H3 M5 15H6 M15 3V5" stroke="#444" stroke-width="1.6" stroke-dasharray="0"/><path d="M8 8 L15 15 M8 8 H13 M8 8 V13" fill="none" stroke="#444" stroke-width="1.6"/></svg>
<svg style="position:absolute;left:1134px;top:32px;" width="19" height="16" viewBox="0 0 19 16"><path d="M2.6 13 V1.3 H16.8 M0.3 13.2 H8.8" fill="none" stroke="#444" stroke-width="1.5"/><rect x="11.5" y="5" width="5.6" height="8.2" fill="none" stroke="#444" stroke-width="1.5"/></svg>
<div style="position:absolute;left:1163px;top:33px;width:1px;height:15px;background:#d3e3fd"></div>
<div class="t " style="left:1177.6px;top:31.00px;font-size:12.5px;line-height:20px;color:#1f1f1f;">元素</div>
<div class="t " style="left:1226.8px;top:31.00px;font-size:12.5px;line-height:20px;color:#1f1f1f;">控制台</div>
<div class="t " style="left:1289.5px;top:31.00px;font-size:12.5px;line-height:20px;color:#1f1f1f;">源代码/来源</div>
<div class="t " style="left:1384px;top:31.00px;font-size:12.5px;line-height:20px;color:#0b57d0;">网络</div>
<div class="t " style="left:1433.8px;top:31.00px;font-size:12.5px;line-height:20px;color:#1f1f1f;">性能</div>
<div class="t " style="left:1483px;top:31.00px;font-size:12.5px;line-height:20px;color:#1f1f1f;">内存</div>
<div class="t " style="left:1531.8px;top:31.00px;font-size:12.5px;line-height:20px;color:#1f1f1f;">应用</div>
<div class="t " style="left:1582px;top:31.00px;font-size:12.5px;line-height:20px;color:#1f1f1f;">隐私与安全</div>
<div style="position:absolute;left:1374px;top:52px;width:49px;height:3px;background:#0b57d0;border-radius:2px 2px 0 0"></div>
<svg style="position:absolute;left:1674px;top:35px;" width="14" height="12" viewBox="0 0 14 12"><path d="M1 1 L6 6 L1 11 M7 1 L12 6 L7 11" fill="none" stroke="#444" stroke-width="1.5"/></svg>
<svg style="position:absolute;left:1754px;top:34px;" width="13" height="13" viewBox="0 0 13 13"><circle cx="6.5" cy="6.5" r="6" fill="#dc362e"/><path d="M4 4 L9 9 M9 4 L4 9" stroke="#fff" stroke-width="1.4"/></svg>
<div class="t " style="left:1769.5px;top:31.50px;font-size:12.5px;line-height:20px;color:#1f1f1f;">2</div>
<div style="position:absolute;left:1095px;top:84px;width:692px;height:1px;background:#d3e3fd"></div>
<svg style="position:absolute;left:1104px;top:61px;" width="17" height="17" viewBox="0 0 17 17"><circle cx="8.5" cy="8.5" r="7.3" fill="none" stroke="#dc362e" stroke-width="1.8"/><rect x="5" y="5" width="7" height="7" fill="#dc362e"/></svg>
<svg style="position:absolute;left:1134px;top:61px;" width="17" height="17" viewBox="0 0 17 17"><circle cx="8.5" cy="8.5" r="7" fill="none" stroke="#444" stroke-width="1.6"/><path d="M3.5 13.5 L13.5 3.5" stroke="#444" stroke-width="1.6"/></svg>
<div style="position:absolute;left:1163px;top:62px;width:1px;height:15px;background:#d3e3fd"></div>
<svg style="position:absolute;left:1177px;top:62px;" width="17" height="16" viewBox="0 0 17 16"><path d="M1 1H14L9 7V14L6 14V7Z" fill="#1b6ef3"/><circle cx="14.5" cy="13.5" r="2" fill="#1b6ef3"/></svg>
<svg style="position:absolute;left:1207px;top:62px;" width="16" height="16" viewBox="0 0 16 16"><circle cx="6" cy="6" r="4.5" fill="none" stroke="#444" stroke-width="1.7"/><path d="M9.5 9.5 L14.5 14.5" stroke="#444" stroke-width="2"/></svg>
<div style="position:absolute;left:1235px;top:62px;width:1px;height:15px;background:#d3e3fd"></div>
<div style="position:absolute;left:1247px;top:64px;width:12px;height:12px;background:#fff;border:1.3px solid #444;border-radius:2px;box-sizing:border-box"></div>
<div class="t " style="left:1266.8px;top:60.50px;font-size:12.5px;line-height:20px;color:#1f1f1f;">保留日志</div>
<div style="position:absolute;left:1329px;top:62px;width:1px;height:15px;background:#d3e3fd"></div>
<div style="position:absolute;left:1341px;top:64px;width:12px;height:12px;background:#fff;border:1.3px solid #444;border-radius:2px;box-sizing:border-box"></div>
<div class="t " style="left:1361.4px;top:60.50px;font-size:12.5px;line-height:20px;color:#1f1f1f;">停用缓存</div>
<div class="t " style="left:1428.6px;top:60.50px;font-size:12.5px;line-height:20px;color:#1f1f1f;">已停用节流模式</div>
<svg style="position:absolute;left:1543px;top:67px;" width="10" height="6" viewBox="0 0 10 6"><path d="M0 0H10L5 5Z" fill="#444"/></svg>
<svg style="position:absolute;left:1566px;top:61px;" width="19" height="17" viewBox="0 0 19 17"><path d="M1 6 A11 11 0 0 1 17 6 M4 9 A7 7 0 0 1 14 9 M7 12 A3 3 0 0 1 11 12" fill="none" stroke="#444" stroke-width="1.6"/><circle cx="15" cy="13" r="2.5" fill="#444"/></svg>
<div style="position:absolute;left:1594px;top:62px;width:1px;height:15px;background:#d3e3fd"></div>
<svg style="position:absolute;left:1607px;top:61px;" width="15" height="16" viewBox="0 0 15 16"><path d="M7.5 11V2 M3 6 L7.5 1.5 L12 6 M1 11V15H14V11" fill="none" stroke="#444" stroke-width="1.7"/></svg>
<svg style="position:absolute;left:1638px;top:61px;" width="15" height="16" viewBox="0 0 15 16"><path d="M7.5 1V10 M3 6 L7.5 10.5 L12 6 M1 11V15H14V11" fill="none" stroke="#444" stroke-width="1.7"/></svg>
<div style="position:absolute;left:1100px;top:89px;width:618px;height:22px;background:#e9eef6;border-radius:11px"></div>
<svg style="position:absolute;left:1113px;top:94px;" width="11" height="12" viewBox="0 0 11 12"><path d="M1 1H10L6.5 5.5V11H4.5V5.5Z" fill="none" stroke="#444" stroke-width="1.5"/></svg>
<div class="t " style="left:1131px;top:90.50px;font-size:12.5px;line-height:20px;color:#1f1f1f;">过滤</div>
<div style="position:absolute;left:1731px;top:93px;width:12px;height:12px;background:#fff;border:1.3px solid #444;border-radius:2px;box-sizing:border-box"></div>
<div class="t " style="left:1750px;top:90.50px;font-size:12.5px;line-height:20px;color:#1f1f1f;">反转</div>
<div style="position:absolute;left:1099.4px;top:117.5px;width:37.19999999999982px;height:20px;background:#fff;border:1px solid #c7c7c7;border-radius:6px;box-sizing:border-box"></div>
<div class="t" style="left:1099.4px;top:117.5px;width:37.19999999999982px;text-align:center;font-size:12.5px;line-height:20px;color:#1f1f1f">全部</div>
<div style="position:absolute;left:1147.2px;top:117.5px;width:73.29999999999995px;height:20px;background:#d3e3fd;border-radius:6px"></div>
<div class="t" style="left:1147.2px;top:117.5px;width:73.29999999999995px;text-align:center;font-size:12.5px;line-height:20px;color:#041e49">Fetch/XHR</div>
<div style="position:absolute;left:1226.4px;top:117.5px;width:36.0px;height:20px;background:#fff;border:1px solid #c7c7c7;border-radius:6px;box-sizing:border-box"></div>
<div class="t" style="left:1226.4px;top:117.5px;width:36.0px;text-align:center;font-size:12.5px;line-height:20px;color:#1f1f1f">文档</div>
<div style="position:absolute;left:1267.4px;top:117.5px;width:34.799999999999955px;height:20px;background:#fff;border:1px solid #c7c7c7;border-radius:6px;box-sizing:border-box"></div>
<div class="t" style="left:1267.4px;top:117.5px;width:34.799999999999955px;text-align:center;font-size:12.5px;line-height:20px;color:#1f1f1f">CSS</div>
<div style="position:absolute;left:1307.5px;top:117.5px;width:23.90000000000009px;height:20px;background:#fff;border:1px solid #c7c7c7;border-radius:6px;box-sizing:border-box"></div>
<div class="t" style="left:1307.5px;top:117.5px;width:23.90000000000009px;text-align:center;font-size:12.5px;line-height:20px;color:#1f1f1f">JS</div>
<div style="position:absolute;left:1336.5px;top:117.5px;width:36.700000000000045px;height:20px;background:#fff;border:1px solid #c7c7c7;border-radius:6px;box-sizing:border-box"></div>
<div class="t" style="left:1336.5px;top:117.5px;width:36.700000000000045px;text-align:center;font-size:12.5px;line-height:20px;color:#1f1f1f">字体</div>
<div style="position:absolute;left:1378.5px;top:117.5px;width:35.799999999999955px;height:20px;background:#fff;border:1px solid #c7c7c7;border-radius:6px;box-sizing:border-box"></div>
<div class="t" style="left:1378.5px;top:117.5px;width:35.799999999999955px;text-align:center;font-size:12.5px;line-height:20px;color:#1f1f1f">图片</div>
<div style="position:absolute;left:1420.4px;top:117.5px;width:36.299999999999955px;height:20px;background:#fff;border:1px solid #c7c7c7;border-radius:6px;box-sizing:border-box"></div>
<div class="t" style="left:1420.4px;top:117.5px;width:36.299999999999955px;text-align:center;font-size:12.5px;line-height:20px;color:#1f1f1f">媒体</div>
<div style="position:absolute;left:1461.8px;top:117.5px;width:36.200000000000045px;height:20px;background:#fff;border:1px solid #c7c7c7;border-radius:6px;box-sizing:border-box"></div>
<div class="t" style="left:1461.8px;top:117.5px;width:36.200000000000045px;text-align:center;font-size:12.5px;line-height:20px;color:#1f1f1f">清单</div>
<div style="position:absolute;left:1503.3px;top:117.5px;width:49.0px;height:20px;background:#fff;border:1px solid #c7c7c7;border-radius:6px;box-sizing:border-box"></div>
<div class="t" style="left:1503.3px;top:117.5px;width:49.0px;text-align:center;font-size:12.5px;line-height:20px;color:#1f1f1f">套接字</div>
<div style="position:absolute;left:1557px;top:117.5px;width:48.299999999999955px;height:20px;background:#fff;border:1px solid #c7c7c7;border-radius:6px;box-sizing:border-box"></div>
<div class="t" style="left:1557px;top:117.5px;width:48.299999999999955px;text-align:center;font-size:12.5px;line-height:20px;color:#1f1f1f">Wasm</div>
<div style="position:absolute;left:1610px;top:117.5px;width:37.200000000000045px;height:20px;background:#fff;border:1px solid #c7c7c7;border-radius:6px;box-sizing:border-box"></div>
<div class="t" style="left:1610px;top:117.5px;width:37.200000000000045px;text-align:center;font-size:12.5px;line-height:20px;color:#1f1f1f">其他</div>
<div style="position:absolute;left:1141px;top:120px;width:1px;height:15px;background:#d3e3fd"></div>
<div style="position:absolute;left:1095px;top:141.5px;width:692px;height:1px;background:#d3e3fd"></div>
<div style="position:absolute;left:1095px;top:229.5px;width:692px;height:1px;background:#d3e3fd"></div>
<div style="position:absolute;left:1096px;top:168px;width:226.5px;height:10.5px;background:#e6eefc"></div>
<div style="position:absolute;left:1171.3px;top:142.5px;width:1px;height:87px;background:#d3e3fd"></div>
<div class="t" style="left:1087.8999999999999px;top:143.5px;width:80px;text-align:right;font-size:11px;line-height:20px;color:#1f1f1f">10 ms</div>
<div style="position:absolute;left:1247.4px;top:142.5px;width:1px;height:87px;background:#d3e3fd"></div>
<div class="t" style="left:1164.0px;top:143.5px;width:80px;text-align:right;font-size:11px;line-height:20px;color:#1f1f1f">20 ms</div>
<div style="position:absolute;left:1323.4px;top:142.5px;width:1px;height:87px;background:#d3e3fd"></div>
<div class="t" style="left:1240.0px;top:143.5px;width:80px;text-align:right;font-size:11px;line-height:20px;color:#1f1f1f">30 ms</div>
<div style="position:absolute;left:1399.5px;top:142.5px;width:1px;height:87px;background:#d3e3fd"></div>
<div class="t" style="left:1316.1px;top:143.5px;width:80px;text-align:right;font-size:11px;line-height:20px;color:#1f1f1f">40 ms</div>
<div style="position:absolute;left:1475.7px;top:142.5px;width:1px;height:87px;background:#d3e3fd"></div>
<div class="t" style="left:1392.3px;top:143.5px;width:80px;text-align:right;font-size:11px;line-height:20px;color:#1f1f1f">50 ms</div>
<div style="position:absolute;left:1551.8px;top:142.5px;width:1px;height:87px;background:#d3e3fd"></div>
<div class="t" style="left:1468.3999999999999px;top:143.5px;width:80px;text-align:right;font-size:11px;line-height:20px;color:#1f1f1f">60 ms</div>
<div style="position:absolute;left:1627.8px;top:142.5px;width:1px;height:87px;background:#d3e3fd"></div>
<div class="t" style="left:1544.3999999999999px;top:143.5px;width:80px;text-align:right;font-size:11px;line-height:20px;color:#1f1f1f">70 ms</div>
<div style="position:absolute;left:1703.8px;top:142.5px;width:1px;height:87px;background:#d3e3fd"></div>
<div class="t" style="left:1620.3999999999999px;top:143.5px;width:80px;text-align:right;font-size:11px;line-height:20px;color:#1f1f1f">80 ms</div>
<div style="position:absolute;left:1779.9px;top:142.5px;width:1px;height:87px;background:#d3e3fd"></div>
<div class="t" style="left:1696.5px;top:143.5px;width:80px;text-align:right;font-size:11px;line-height:20px;color:#1f1f1f">90 ms</div>
<div style="position:absolute;left:1095px;top:142px;width:2px;height:88px;background:#a8c7fa"></div>
<div style="position:absolute;left:1095px;top:142.5px;width:6px;height:19px;background:#d3e3fd;border-radius:0 4px 4px 0"></div>
<div style="position:absolute;left:1096px;top:148px;width:1.3px;height:8px;background:#0b57d0"></div>
<div style="position:absolute;left:1100.5px;top:170px;width:4.5px;height:6px;background:#111"></div>
<div style="position:absolute;left:1105px;top:170px;width:211.4px;height:6px;background:#34b359"></div>
<div style="position:absolute;left:1316.4px;top:170px;width:4.6px;height:6px;background:#5b8def"></div>
<div style="position:absolute;left:1323px;top:173px;width:4px;height:2.6px;background:#5b8def"></div>
<div style="position:absolute;left:1096px;top:231px;width:191px;height:29px;background:#f8fafd"></div>
<div style="position:absolute;left:1095px;top:260px;width:692px;height:1px;background:#d3e3fd"></div>
<div style="position:absolute;left:1287px;top:231px;width:1px;height:597px;background:#d3e3fd"></div>
<div class="t " style="left:1100.5px;top:235.10px;font-size:12.5px;line-height:20px;color:#1f1f1f;">名称</div>
<div style="position:absolute;left:1096px;top:261px;width:191px;height:22.5px;background:#d3e3fd"></div>
<div class="t" style="left:1100px;top:261px;font-size:12px;line-height:22px;color:#e8710a;font-weight:bold">{;}</div>
<div class="t " style="left:1120.3px;top:261.80px;font-size:14.2px;line-height:20px;color:#0b1d3f;">cancelMonthlyCard</div>
<div style="position:absolute;left:1288px;top:231px;width:498px;height:29px;background:#edf2fa"></div>
<svg style="position:absolute;left:1304px;top:239px;" width="12" height="12" viewBox="0 0 12 12"><path d="M1 1L11 11M11 1L1 11" stroke="#444" stroke-width="1.6"/></svg>
<div class="t " style="left:1339px;top:236.00px;font-size:12.5px;line-height:20px;color:#474747;">标头</div>
<div class="t " style="left:1388.3px;top:236.00px;font-size:12.5px;line-height:20px;color:#474747;">载荷</div>
<div class="t " style="left:1437.7px;top:236.00px;font-size:12.5px;line-height:20px;color:#474747;">预览</div>
<div class="t " style="left:1487px;top:236.00px;font-size:12.5px;line-height:20px;color:#0b57d0;">响应</div>
<div class="t " style="left:1536.5px;top:236.00px;font-size:12.5px;line-height:20px;color:#474747;">启动器</div>
<div class="t " style="left:1599px;top:236.00px;font-size:12.5px;line-height:20px;color:#474747;">时间</div>
<div style="position:absolute;left:1476.5px;top:256.5px;width:49px;height:3.5px;background:#0b57d0;border-radius:2px 2px 0 0"></div>
<div style="position:absolute;left:1351px;top:262px;width:1px;height:91px;background:#7aa7f5"></div>
<div style="position:absolute;left:1322px;top:270.4px;width:6px;height:1.2px;background:#1a6ee8"></div>
<div class="t" style="left:1381.5px;top:261.4px;font-family:'Liberation Serif',serif;font-size:12.8px;line-height:20px;-webkit-text-stroke:0.25px currentColor"><span style="display:inline-block;width:6.93px;text-align:center;color:#a31515">"</span><span style="display:inline-block;width:6.93px;text-align:center;color:#a31515">c</span><span style="display:inline-block;width:6.93px;text-align:center;color:#a31515">o</span><span style="display:inline-block;width:6.93px;text-align:center;color:#a31515">d</span><span style="display:inline-block;width:6.93px;text-align:center;color:#a31515">e</span><span style="display:inline-block;width:6.93px;text-align:center;color:#a31515">"</span><span style="display:inline-block;width:6.93px;text-align:center;color:#1f1f1f">:</span><span style="display:inline-block;width:6.93px;text-align:center;color:#1f1f1f">&nbsp;</span><span style="display:inline-block;width:6.93px;text-align:center;color:#2457d6">1</span><span style="display:inline-block;width:6.93px;text-align:center;color:#2457d6">0</span><span style="display:inline-block;width:6.93px;text-align:center;color:#2457d6">0</span><span style="display:inline-block;width:6.93px;text-align:center;color:#2457d6">0</span><span style="display:inline-block;width:6.93px;text-align:center;color:#2457d6">1</span><span style="display:inline-block;width:6.93px;text-align:center;color:#1f1f1f">,</span></div>
<div style="position:absolute;left:1322px;top:288.7px;width:6px;height:1.2px;background:#1a6ee8"></div>
<div class="t" style="left:1381.5px;top:279.7px;font-family:'Liberation Serif',serif;font-size:12.8px;line-height:20px;-webkit-text-stroke:0.25px currentColor"><span style="display:inline-block;width:6.93px;text-align:center;color:#a31515">"</span><span style="display:inline-block;width:6.93px;text-align:center;color:#a31515">l</span><span style="display:inline-block;width:6.93px;text-align:center;color:#a31515">e</span><span style="display:inline-block;width:6.93px;text-align:center;color:#a31515">v</span><span style="display:inline-block;width:6.93px;text-align:center;color:#a31515">e</span><span style="display:inline-block;width:6.93px;text-align:center;color:#a31515">l</span><span style="display:inline-block;width:6.93px;text-align:center;color:#a31515">"</span><span style="display:inline-block;width:6.93px;text-align:center;color:#1f1f1f">:</span><span style="display:inline-block;width:6.93px;text-align:center;color:#1f1f1f">&nbsp;</span><span style="display:inline-block;width:6.93px;text-align:center;color:#a31515">"</span><span style="display:inline-block;width:6.93px;text-align:center;color:#a31515">s</span><span style="display:inline-block;width:6.93px;text-align:center;color:#a31515">y</span><span style="display:inline-block;width:6.93px;text-align:center;color:#a31515">s</span><span style="display:inline-block;width:6.93px;text-align:center;color:#a31515">t</span><span style="display:inline-block;width:6.93px;text-align:center;color:#a31515">e</span><span style="display:inline-block;width:6.93px;text-align:center;color:#a31515;transform:scaleX(0.72)">m</span><span style="display:inline-block;width:6.93px;text-align:center;color:#a31515">"</span><span style="display:inline-block;width:6.93px;text-align:center;color:#1f1f1f">,</span></div>
<div style="position:absolute;left:1322px;top:307.0px;width:6px;height:1.2px;background:#1a6ee8"></div>
<div class="t" style="left:1381.5px;top:298.0px;font-family:'Liberation Serif',serif;font-size:12.8px;line-height:20px;-webkit-text-stroke:0.25px currentColor"><span style="display:inline-block;width:6.93px;text-align:center;color:#a31515">"</span><span style="display:inline-block;width:6.93px;text-align:center;color:#a31515;transform:scaleX(0.72)">m</span><span style="display:inline-block;width:6.93px;text-align:center;color:#a31515">s</span><span style="display:inline-block;width:6.93px;text-align:center;color:#a31515">g</span><span style="display:inline-block;width:6.93px;text-align:center;color:#a31515">"</span><span style="display:inline-block;width:6.93px;text-align:center;color:#1f1f1f">:</span><span style="display:inline-block;width:6.93px;text-align:center;color:#1f1f1f">&nbsp;</span><span style="display:inline-block;width:6.93px;text-align:center;color:#a31515">"</span><span style="display:inline-block;width:6.93px;text-align:center;color:#a31515;transform:scaleX(0.72)">N</span><span style="display:inline-block;width:6.93px;text-align:center;color:#a31515">o</span><span style="display:inline-block;width:6.93px;text-align:center;color:#a31515">&nbsp;</span><span style="display:inline-block;width:6.93px;text-align:center;color:#a31515">s</span><span style="display:inline-block;width:6.93px;text-align:center;color:#a31515">t</span><span style="display:inline-block;width:6.93px;text-align:center;color:#a31515">a</span><span style="display:inline-block;width:6.93px;text-align:center;color:#a31515">t</span><span style="display:inline-block;width:6.93px;text-align:center;color:#a31515">i</span><span style="display:inline-block;width:6.93px;text-align:center;color:#a31515">c</span><span style="display:inline-block;width:6.93px;text-align:center;color:#a31515">&nbsp;</span><span style="display:inline-block;width:6.93px;text-align:center;color:#a31515">r</span><span style="display:inline-block;width:6.93px;text-align:center;color:#a31515">e</span><span style="display:inline-block;width:6.93px;text-align:center;color:#a31515">s</span><span style="display:inline-block;width:6.93px;text-align:center;color:#a31515">o</span><span style="display:inline-block;width:6.93px;text-align:center;color:#a31515">u</span><span style="display:inline-block;width:6.93px;text-align:center;color:#a31515">r</span><span style="display:inline-block;width:6.93px;text-align:center;color:#a31515">c</span><span style="display:inline-block;width:6.93px;text-align:center;color:#a31515">e</span><span style="display:inline-block;width:6.93px;text-align:center;color:#a31515">&nbsp;</span><span style="display:inline-block;width:6.93px;text-align:center;color:#a31515">c</span><span style="display:inline-block;width:6.93px;text-align:center;color:#a31515">a</span><span style="display:inline-block;width:6.93px;text-align:center;color:#a31515">r</span><span style="display:inline-block;width:6.93px;text-align:center;color:#a31515">/</span><span style="display:inline-block;width:6.93px;text-align:center;color:#a31515">c</span><span style="display:inline-block;width:6.93px;text-align:center;color:#a31515">a</span><span style="display:inline-block;width:6.93px;text-align:center;color:#a31515">n</span><span style="display:inline-block;width:6.93px;text-align:center;color:#a31515">c</span><span style="display:inline-block;width:6.93px;text-align:center;color:#a31515">e</span><span style="display:inline-block;width:6.93px;text-align:center;color:#a31515">l</span><span style="display:inline-block;width:6.93px;text-align:center;color:#a31515;transform:scaleX(0.8)">M</span><span style="display:inline-block;width:6.93px;text-align:center;color:#a31515">o</span><span style="display:inline-block;width:6.93px;text-align:center;color:#a31515">n</span><span style="display:inline-block;width:6.93px;text-align:center;color:#a31515">t</span><span style="display:inline-block;width:6.93px;text-align:center;color:#a31515">h</span><span style="display:inline-block;width:6.93px;text-align:center;color:#a31515">l</span><span style="display:inline-block;width:6.93px;text-align:center;color:#a31515">y</span><span style="display:inline-block;width:6.93px;text-align:center;color:#a31515">C</span><span style="display:inline-block;width:6.93px;text-align:center;color:#a31515">a</span><span style="display:inline-block;width:6.93px;text-align:center;color:#a31515">r</span><span style="display:inline-block;width:6.93px;text-align:center;color:#a31515">d</span><span style="display:inline-block;width:6.93px;text-align:center;color:#a31515">.</span><span style="display:inline-block;width:6.93px;text-align:center;color:#a31515">"</span><span style="display:inline-block;width:6.93px;text-align:center;color:#1f1f1f">,</span></div>
<div style="position:absolute;left:1322px;top:325.29999999999995px;width:6px;height:1.2px;background:#1a6ee8"></div>
<div class="t" style="left:1381.5px;top:316.3px;font-family:'Liberation Serif',serif;font-size:12.8px;line-height:20px;-webkit-text-stroke:0.25px currentColor"><span style="display:inline-block;width:6.93px;text-align:center;color:#a31515">"</span><span style="display:inline-block;width:6.93px;text-align:center;color:#a31515">o</span><span style="display:inline-block;width:6.93px;text-align:center;color:#a31515">k</span><span style="display:inline-block;width:6.93px;text-align:center;color:#a31515">"</span><span style="display:inline-block;width:6.93px;text-align:center;color:#1f1f1f">:</span><span style="display:inline-block;width:6.93px;text-align:center;color:#1f1f1f">&nbsp;</span><span style="display:inline-block;width:6.93px;text-align:center;color:#0d22aa">f</span><span style="display:inline-block;width:6.93px;text-align:center;color:#0d22aa">a</span><span style="display:inline-block;width:6.93px;text-align:center;color:#0d22aa">l</span><span style="display:inline-block;width:6.93px;text-align:center;color:#0d22aa">s</span><span style="display:inline-block;width:6.93px;text-align:center;color:#0d22aa">e</span><span style="display:inline-block;width:6.93px;text-align:center;color:#1f1f1f">,</span></div>
<div style="position:absolute;left:1322px;top:343.59999999999997px;width:6px;height:1.2px;background:#1a6ee8"></div>
<div class="t" style="left:1381.5px;top:334.6px;font-family:'Liberation Serif',serif;font-size:12.8px;line-height:20px;-webkit-text-stroke:0.25px currentColor"><span style="display:inline-block;width:6.93px;text-align:center;color:#a31515">"</span><span style="display:inline-block;width:6.93px;text-align:center;color:#a31515">d</span><span style="display:inline-block;width:6.93px;text-align:center;color:#a31515">a</span><span style="display:inline-block;width:6.93px;text-align:center;color:#a31515">t</span><span style="display:inline-block;width:6.93px;text-align:center;color:#a31515">a</span><span style="display:inline-block;width:6.93px;text-align:center;color:#a31515">T</span><span style="display:inline-block;width:6.93px;text-align:center;color:#a31515">y</span><span style="display:inline-block;width:6.93px;text-align:center;color:#a31515">p</span><span style="display:inline-block;width:6.93px;text-align:center;color:#a31515">e</span><span style="display:inline-block;width:6.93px;text-align:center;color:#a31515">"</span><span style="display:inline-block;width:6.93px;text-align:center;color:#1f1f1f">:</span><span style="display:inline-block;width:6.93px;text-align:center;color:#1f1f1f">&nbsp;</span><span style="display:inline-block;width:6.93px;text-align:center;color:#2457d6">1</span></div>
<div style="position:absolute;left:1322px;top:361.9px;width:6px;height:1.2px;background:#1a6ee8"></div>
<div class="t" style="left:1352.5px;top:352.9px;font-family:'Liberation Serif',serif;font-size:12.8px;line-height:20px;-webkit-text-stroke:0.25px currentColor"><span style="display:inline-block;width:6.93px;text-align:center;color:#1f1f1f">}</span></div>
<div style="position:absolute;left:140px;top:139px;width:954px;height:689px;overflow:hidden;pointer-events:none">
<div class="t" style="left:55px;top:37.5px;width:180px;text-align:center;font-size:15px;line-height:20px;color:rgba(0,0,0,0.1);transform:rotate(-17.5deg)">江言 2025-09-04 17:46</div>
<div class="t" style="left:413.4px;top:37.5px;width:180px;text-align:center;font-size:15px;line-height:20px;color:rgba(0,0,0,0.1);transform:rotate(-17.5deg)">江言 2025-09-04 17:46</div>
<div class="t" style="left:773px;top:37.5px;width:180px;text-align:center;font-size:15px;line-height:20px;color:rgba(0,0,0,0.1);transform:rotate(-17.5deg)">江言 2025-09-04 17:46</div>
<div class="t" style="left:55px;top:217.5px;width:180px;text-align:center;font-size:15px;line-height:20px;color:rgba(0,0,0,0.1);transform:rotate(-17.5deg)">江言 2025-09-04 17:46</div>
<div class="t" style="left:413.4px;top:217.5px;width:180px;text-align:center;font-size:15px;line-height:20px;color:rgba(0,0,0,0.1);transform:rotate(-17.5deg)">江言 2025-09-04 17:46</div>
<div class="t" style="left:773px;top:217.5px;width:180px;text-align:center;font-size:15px;line-height:20px;color:rgba(0,0,0,0.1);transform:rotate(-17.5deg)">江言 2025-09-04 17:46</div>
<div class="t" style="left:55px;top:398.5px;width:180px;text-align:center;font-size:15px;line-height:20px;color:rgba(0,0,0,0.1);transform:rotate(-17.5deg)">江言 2025-09-04 17:46</div>
<div class="t" style="left:413.4px;top:398.5px;width:180px;text-align:center;font-size:15px;line-height:20px;color:rgba(0,0,0,0.1);transform:rotate(-17.5deg)">江言 2025-09-04 17:46</div>
<div class="t" style="left:773px;top:398.5px;width:180px;text-align:center;font-size:15px;line-height:20px;color:rgba(0,0,0,0.1);transform:rotate(-17.5deg)">江言 2025-09-04 17:46</div>
<div class="t" style="left:55px;top:579.5px;width:180px;text-align:center;font-size:15px;line-height:20px;color:rgba(0,0,0,0.1);transform:rotate(-17.5deg)">江言 2025-09-04 17:46</div>
<div class="t" style="left:413.4px;top:579.5px;width:180px;text-align:center;font-size:15px;line-height:20px;color:rgba(0,0,0,0.1);transform:rotate(-17.5deg)">江言 2025-09-04 17:46</div>
<div class="t" style="left:773px;top:579.5px;width:180px;text-align:center;font-size:15px;line-height:20px;color:rgba(0,0,0,0.1);transform:rotate(-17.5deg)">江言 2025-09-04 17:46</div>
</div>
<svg style="position:absolute;left:0;top:0" width="1786" height="828" viewBox="0 0 1786 828">
<rect x="968.8" y="334.9" width="61.6" height="37.9" rx="19" ry="19" fill="none" stroke="#ff0000" stroke-width="3.6"/>
<rect x="1299.4" y="292.3" width="451.5" height="29.7" rx="15" ry="15" fill="none" stroke="#ff0000" stroke-width="3.6"/>
<polygon points="1031,361.8 1263.1,337.6 1258.9,332.1 1278.5,340.2 1260.1,351.7 1263.4,345.2 1031,363" fill="#ff0d0d"/>
<polygon points="1363.6,338.9 1112.9,623 1111.5,616 1105.9,636.6 1126,628.3 1119.5,627.4 1364.2,339.5" fill="#ff0d0d"/>
<g transform="matrix(1.0 0 0 0.9456 0 36.9)">
<text y="762" style="font-family:'Liberation Sans';font-size:61.5px;font-weight:900" fill="#fff" stroke="#fff" stroke-width="9" stroke-linejoin="round"><tspan x="577.50">点</tspan><tspan x="639.60">击</tspan><tspan x="701.00">取</tspan><tspan x="765.50">消</tspan><tspan x="829.60">月</tspan><tspan x="888.50">卡</tspan><tspan x="932.00">，</tspan><tspan x="1012.80">接</tspan><tspan x="1073.60">口</tspan><tspan x="1137.00">报</tspan><tspan x="1197.00">错</tspan><tspan x="1241.50">！</tspan></text>
<text y="762" style="font-family:'Liberation Sans';font-size:61.5px;font-weight:900" fill="#ff1010" stroke="#ff1010" stroke-width="1.6"><tspan x="577.50">点</tspan><tspan x="639.60">击</tspan><tspan x="701.00">取</tspan><tspan x="765.50">消</tspan><tspan x="829.60">月</tspan><tspan x="888.50">卡</tspan><tspan x="932.00">，</tspan><tspan x="1012.80">接</tspan><tspan x="1073.60">口</tspan><tspan x="1137.00">报</tspan><tspan x="1197.00">错</tspan><tspan x="1241.50">！</tspan></text>
</g>
</svg>
</body></html>
